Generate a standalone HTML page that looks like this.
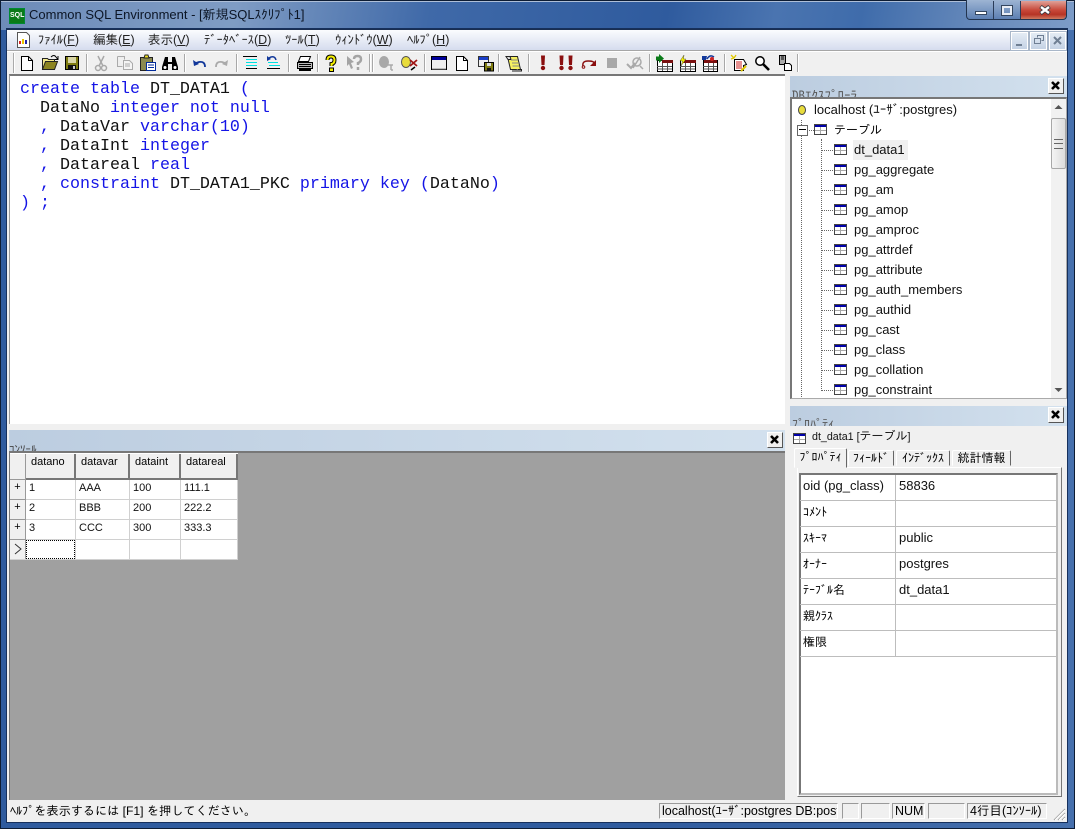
<!DOCTYPE html>
<html lang="ja"><head><meta charset="utf-8"><title>Common SQL Environment</title>
<style>
html,body{margin:0;padding:0;background:#1b3a6b}
body{width:1075px;height:829px;position:relative;overflow:hidden;font-family:"Liberation Sans","IPAGothic","Noto Sans CJK JP",sans-serif;font-size:13px;color:#000}
div,span.a,svg{position:absolute}
.t{white-space:nowrap;line-height:16px}
.m{top:32px;font-size:12.5px;color:#222;font-family:"Liberation Sans","IPAGothic",sans-serif}
.m u{text-decoration:underline}
.sep{top:54px;width:1px;height:18px;background:#a8a8a8;border-right:1px solid #fff}
.ic{top:54px;width:18px;height:18px}
.cl{width:14px;height:14px;background:#f0f0f0;border:1px solid;border-color:#fff #555 #555 #fff}
.cl svg{left:0;top:0}
.band{background:linear-gradient(90deg,#bccde0,#d3e1ee);overflow:hidden}
.tr{left:854px;font-size:13px;color:#111}
.dot{width:11px;height:0;border-top:1px dotted #666}
.ti{left:834px;width:13px;height:11px}
.code{left:20px;font-family:"Liberation Mono",monospace;font-size:16.67px;line-height:19px;white-space:pre;color:#111}
.code b{font-weight:normal;color:#1414e6}
.gh{background:#f0f0f0;border-right:2px solid #777;border-bottom:2px solid #777;box-sizing:border-box;top:454px;height:26px;font-size:11px;padding:1px 0 0 5px;line-height:14px}
.c{font-size:11px;font-family:"Liberation Sans",sans-serif;line-height:14px;white-space:nowrap;color:#111}
.gl{background:#d0d0d0}
.rh{left:10px;width:16px;height:20px;background:#f0f0f0;border-right:1px solid #999;border-bottom:1px solid #999;box-sizing:border-box;text-align:center;font-size:11px;line-height:14px}
.pk{left:803px;font-size:12px;font-family:"IPAGothic","Liberation Sans",sans-serif}
.pv{left:899px;font-size:13px;color:#111}
.hl{left:800px;width:256px;height:1px;background:#bdbdbd}
.tab{top:450px;height:16px;background:#f0f0f0;border:1px solid;border-color:#fff #666 #f0f0f0 #fff;font-size:12px;text-align:center;line-height:15px;font-family:"IPAGothic","Liberation Sans",sans-serif;box-sizing:border-box;white-space:nowrap;border-radius:2px 2px 0 0}
.sb{top:803px;height:16px;box-sizing:border-box;border:1px solid;border-color:#9a9a9a #fff #fff #9a9a9a;font-size:12.5px;line-height:14px;overflow:hidden;white-space:nowrap;padding-left:2px}
.mb{top:32px;width:18px;height:18px;background:linear-gradient(#e4ecf5,#c4d2e4);border:1px solid #fff;outline:1px solid #a9b7c9}
</style></head><body>

<svg width="0" height="0" style="left:0;top:0"><defs>
<g id="tb"><rect x=".5" y=".5" width="12" height="10" fill="#fff" stroke="#444"/><rect x="1" y="1" width="11" height="2" fill="#0000a8"/><path d="M1 6.500h11M6.500 3v7" stroke="#a8a8a8" fill="none"/></g>
<g id="bt"><path d="M3 3l7 7M10 3l-7 7" stroke="#000" stroke-width="2.600"/></g>
</defs></svg>

<!-- window chrome -->
<div style="left:0;top:0;width:1075px;height:829px;background:linear-gradient(90deg,#2f5b9e 0,#2f5b9e 60%,#4670ad 100%);border-radius:6px 6px 0 0"></div>
<div style="left:0;top:0;width:1075px;height:30px;background:linear-gradient(100deg,#6d8cb9 0,#7f9cc4 22%,#3f69a8 40%,#2f5b9e 62%,#4a74b0 72%,#3f6cab 80%,#6a8cbc 92%,#7d9cc8 100%);border-radius:6px 6px 0 0"></div>
<div style="left:1px;top:1px;width:1073px;height:1px;background:#aebfd8"></div>
<div style="left:0;top:0;width:1075px;height:1px;background:#0d1c33"></div>
<div style="left:0;top:0;width:1px;height:829px;background:#0d1c33"></div>
<div style="left:1074px;top:0;width:1px;height:829px;background:#0d1c33"></div>
<div style="left:0;top:828px;width:1075px;height:1px;background:#0d1c33"></div>
<div style="left:6px;top:28px;width:1062px;height:795px;background:#16305c"></div>
<div style="left:7px;top:29px;width:1060px;height:793px;background:#f0f0f0"></div>

<!-- app icon + title -->
<div style="left:9px;top:8px;width:14px;height:14px;background:#0a7a18;border:1px solid #083;color:#fff;font:bold 7px/14px 'Liberation Sans',sans-serif;text-align:center">SQL</div>
<div class="t" style="left:29px;top:7px;font-size:13px;color:#0c1626;font-family:'Liberation Sans','IPAGothic',sans-serif">Common SQL Environment - [新規SQLｽｸﾘﾌﾟﾄ1]</div>

<!-- window buttons -->
<div style="left:966px;top:0;width:101px;height:20px;background:linear-gradient(#9db4d3,#5d80b3);border:1px solid #22344f;border-top:0;border-radius:0 0 4px 4px;box-sizing:border-box"></div>
<div style="left:993px;top:1px;width:1px;height:18px;background:#2a3c58"></div>
<div style="left:1020px;top:1px;width:1px;height:18px;background:#2a3c58"></div>
<div style="left:1021px;top:1px;width:45px;height:18px;background:linear-gradient(#dfa197,#c8493a 50%,#b63325 75%,#cf7a5f);border-radius:0 0 4px 0"></div>
<div style="left:975px;top:11px;width:10px;height:2px;background:#fff;border:1px solid #34465f"></div>
<div style="left:1002px;top:6px;width:6px;height:5px;border:2px solid #e8edf5;outline:1px solid #34465f"></div>
<svg style="left:1038px;top:5px" width="14" height="10"><path d="M2.500 1.500l9 7M11.500 1.500l-9 7" stroke="#39393f" stroke-width="4"/><path d="M3 2l8 6M11 2l-8 6" stroke="#fff" stroke-width="2.400"/></svg>

<!-- menu bar -->
<div style="left:7px;top:29px;width:1060px;height:1px;background:#1a2e50"></div>
<div style="left:7px;top:30px;width:1060px;height:20px;background:linear-gradient(#fbfcfe,#d5dcee)"></div>
<div style="left:7px;top:50px;width:1060px;height:1px;background:#a6a6a6"></div>
<svg style="left:16px;top:32px" width="16" height="16"><path d="M1.500.5h9l3 3v12h-12z" fill="#fff" stroke="#555"/><rect x="3" y="9" width="2" height="3" fill="#d22"/><rect x="6" y="7" width="2" height="5" fill="#e8c400"/><rect x="9" y="8" width="2" height="4" fill="#22a"/></svg>
<div class="t m" style="left:38px">ﾌｧｲﾙ(<u>F</u>)</div>
<div class="t m" style="left:93px">編集(<u>E</u>)</div>
<div class="t m" style="left:148px">表示(<u>V</u>)</div>
<div class="t m" style="left:204px">ﾃﾞｰﾀﾍﾞｰｽ(<u>D</u>)</div>
<div class="t m" style="left:285px">ﾂｰﾙ(<u>T</u>)</div>
<div class="t m" style="left:335px">ｳｨﾝﾄﾞｳ(<u>W</u>)</div>
<div class="t m" style="left:407px">ﾍﾙﾌﾟ(<u>H</u>)</div>
<div class="mb" style="left:1011px;width:15px;height:16px"><div style="left:4px;top:11px;width:6px;height:2px;background:#6f7f93"></div></div>
<div class="mb" style="left:1030px;width:15px;height:16px"><svg style="left:3px;top:2px" width="10" height="10"><path d="M3.500 2.500V.5h6v5h-2M.5 3.500h6v5h-6z" fill="none" stroke="#6f7f93"/></svg></div>
<div class="mb" style="left:1049px;width:15px;height:16px"><svg style="left:3px;top:3px" width="9" height="9"><path d="M1 1l7 7M8 1l-7 7" stroke="#6f7f93" stroke-width="2"/></svg></div>

<!-- toolbar -->
<div style="left:7px;top:51px;width:1060px;height:1px;background:#fff"></div>
<div style="left:13px;top:53px;width:1px;height:20px;background:#aaa;border-right:1px solid #fff"></div>
<div class="sep" style="left:86px"></div><div class="sep" style="left:184px"></div><div class="sep" style="left:236px"></div><div class="sep" style="left:288px"></div><div class="sep" style="left:317px"></div><div class="sep" style="left:369px"></div><div class="sep" style="left:372px"></div><div class="sep" style="left:424px"></div><div class="sep" style="left:498px"></div><div class="sep" style="left:528px"></div><div class="sep" style="left:649px"></div><div class="sep" style="left:724px"></div><div class="sep" style="left:797px"></div>

<svg class="ic" style="left:18px" viewBox="0 0 18 18"><path d="M3.500 2.500h7l4 4v10h-11z" fill="#fff" stroke="#000"/><path d="M10.500 2.500v4h4" fill="none" stroke="#000"/></svg>
<svg class="ic" style="left:41px" viewBox="0 0 18 18"><path d="M1.500 4.500h5l1 1h6v2H5l-3.500 8z" fill="#f4ea8c" stroke="#222"/><path d="M1.500 15.500l3-8h12l-3 8z" fill="#8c8420" stroke="#222"/><path d="M10 3q3-3 5 0l1.500 2M17 2v3.500h-3" fill="none" stroke="#000"/></svg>
<svg class="ic" style="left:63px" viewBox="0 0 18 18"><rect x="2.500" y="2.500" width="13" height="13" fill="#7f7c12" stroke="#000"/><rect x="5" y="3" width="8" height="6" fill="#d9d6a6"/><rect x="5" y="11" width="8" height="4.500" fill="#111"/><rect x="10" y="12" width="2" height="3" fill="#ccc"/></svg>
<svg class="ic" style="left:92px" viewBox="0 0 18 18"><path d="M6 2l5 10M12 2L7 12" stroke="#a8a8a8" stroke-width="1.500"/><circle cx="6" cy="14" r="2.500" fill="none" stroke="#a8a8a8" stroke-width="1.500"/><circle cx="12" cy="14" r="2.500" fill="none" stroke="#a8a8a8" stroke-width="1.500"/></svg>
<svg class="ic" style="left:116px" viewBox="0 0 18 18"><path d="M1.500 2.500h7v3M1.500 2.500v10h5" fill="#eee" stroke="#aaa"/><path d="M7.500 6.500h6l3 3v6h-9z" fill="#f4f4f4" stroke="#aaa"/><path d="M9 10h5M9 12h5" stroke="#aaa"/></svg>
<svg class="ic" style="left:139px" viewBox="0 0 18 18"><rect x="1.500" y="3.500" width="12" height="13" fill="#8a8a50" stroke="#222"/><path d="M5 4l1-3h3l1 3z" fill="#eee020" stroke="#222"/><rect x="7.500" y="8.500" width="9" height="8" fill="#fff" stroke="#002a9a"/><path d="M9 11h6M9 13.500h6" stroke="#002a9a"/></svg>
<svg class="ic" style="left:161px" viewBox="0 0 18 18"><path d="M4 3h3v5h4V3h3l3 10v3h-6V10H7v6H1v-3z" fill="#000"/><circle cx="4" cy="13.500" r="1.500" fill="#fff"/><circle cx="14" cy="13.500" r="1.500" fill="#fff"/></svg>
<svg class="ic" style="left:190px" viewBox="0 0 18 18"><path d="M15 13q0-6-6-5l-3 1" fill="none" stroke="#12389a" stroke-width="1.800"/><path d="M3 6l1 6 5-2z" fill="#12389a"/></svg>
<svg class="ic" style="left:213px" viewBox="0 0 18 18"><path d="M3 13q0-6 6-5l3 1" fill="none" stroke="#aaa" stroke-width="1.800"/><path d="M15 6l-1 6-5-2z" fill="#aaa"/></svg>
<svg class="ic" style="left:241px" viewBox="0 0 18 18"><path d="M5 5.500h11M5 8.500h11M5 11.500h11" stroke="#00e0e0"/><path d="M2 2.500h14M5 14.500h11" stroke="#000"/></svg>
<svg class="ic" style="left:264px" viewBox="0 0 18 18"><path d="M4 8.500h10M5 11.500h11" stroke="#00e0e0"/><path d="M3 14.500h13" stroke="#000"/><path d="M12 6q-1-4-5-3L5 4" fill="none" stroke="#12389a" stroke-width="1.500"/><path d="M3 2v5l4-2z" fill="#12389a"/></svg>
<svg class="ic" style="left:296px" viewBox="0 0 18 18"><path d="M4.500 2.500h10l-2 5h-10z" fill="#fff" stroke="#000"/><path d="M1.500 8.500h15v6h-15z" fill="#bbb" stroke="#000"/><path d="M3 10.500h12M3 12.500h12" stroke="#000"/><rect x="3" y="15" width="12" height="2" fill="#000"/></svg>
<svg class="ic" style="left:322px" viewBox="0 0 18 18"><path d="M5.500 6q0-3.500 3.500-3.500T12.500 6 9.500 10v2" fill="none" stroke="#000" stroke-width="4"/><path d="M5.500 6q0-3.500 3.500-3.500T12.500 6 9.500 10v2" fill="none" stroke="#f5f000" stroke-width="2"/><rect x="7.500" y="14" width="4" height="3.500" fill="#f5f000" stroke="#000"/></svg>
<svg class="ic" style="left:345px" viewBox="0 0 18 18"><path d="M2 2l7 6-3 1 2 5-2 1-2-5-2 2z" fill="#a4a4a4"/><path d="M9 5q0-3 3.500-3T16 5t-3 4v2M13 13v3" fill="none" stroke="#a4a4a4" stroke-width="2.500"/></svg>
<svg class="ic" style="left:377px" viewBox="0 0 18 18"><ellipse cx="7" cy="8" rx="5" ry="6" fill="#a8a8a8"/><path d="M11 11h5M14 11v5M16 16h-2" stroke="#aaa" stroke-width="1.500" fill="none"/></svg>
<svg class="ic" style="left:400px" viewBox="0 0 18 18"><ellipse cx="6" cy="8" rx="4.500" ry="5.500" fill="#e8dc3c" stroke="#555"/><path d="M10 6l7 6M17 6l-7 6" stroke="#a01414" stroke-width="1.800"/><path d="M11 16l4-3" stroke="#000" stroke-width="1.500"/></svg>
<svg class="ic" style="left:430px" viewBox="0 0 18 18"><rect x="1.500" y="2.500" width="15" height="13" fill="#eee" stroke="#000"/><rect x="2" y="3" width="14" height="3" fill="#00009a"/><path d="M2 15h14" stroke="#888"/></svg>
<svg class="ic" style="left:453px" viewBox="0 0 18 18"><path d="M3.500 2.500h7l4 4v10h-11z" fill="#fff" stroke="#000"/><path d="M10.500 2.500v4h4" fill="none" stroke="#000"/></svg>
<svg class="ic" style="left:477px" viewBox="0 0 18 18"><rect x="1.500" y="2.500" width="10" height="10" fill="#eee" stroke="#333"/><rect x="2" y="3" width="9" height="3" fill="#1a3ec8"/><rect x="7.500" y="8.500" width="9" height="8.500" fill="#7f7c12" stroke="#000"/><rect x="10" y="9" width="4" height="3" fill="#ddd"/><rect x="10" y="14" width="4" height="3" fill="#111"/></svg>
<svg class="ic" style="left:505px" viewBox="0 0 18 18"><path d="M2.500 2.500h10l3 13h-10z" fill="#f5f060" stroke="#222"/><path d="M1 2.500h4l1 3H3zM13 15.500h3.500v1.500H7" fill="#ddd" stroke="#222"/><path d="M6 6h7M7 9h7M7.500 12h7" stroke="#888"/></svg>
<svg class="ic" style="left:534px" viewBox="0 0 18 18"><path d="M7 1.500h4L10.500 11h-3z" fill="#8a0f0f"/><circle cx="9" cy="14" r="2.200" fill="#8a0f0f"/></svg>
<svg class="ic" style="left:557px" viewBox="0 0 18 18"><path d="M2.500 1.500h4L6 11H3zM11.500 1.500h4L15 11h-3z" fill="#8a0f0f"/><circle cx="4.500" cy="14" r="2.200" fill="#8a0f0f"/><circle cx="13.500" cy="14" r="2.200" fill="#8a0f0f"/></svg>
<svg class="ic" style="left:580px" viewBox="0 0 18 18"><path d="M3 12q-1-5 5-5t6 2" fill="none" stroke="#8a0f0f" stroke-width="1.500"/><circle cx="3.500" cy="13" r="1.300" fill="none" stroke="#8a0f0f"/><path d="M16 6v6h-6z" fill="#8a0f0f"/></svg>
<svg class="ic" style="left:603px" viewBox="0 0 18 18"><rect x="4" y="4" width="10" height="10" fill="#a8a8a8"/></svg>
<svg class="ic" style="left:626px" viewBox="0 0 18 18"><path d="M1 10l4 4 4-5" fill="none" stroke="#aaa" stroke-width="2"/><circle cx="11" cy="8" r="4" fill="none" stroke="#aaa" stroke-width="1.500"/><path d="M14 3l-7 11M14 12l3 3" stroke="#aaa" stroke-width="1.500"/></svg>
<svg class="ic" style="left:655px" viewBox="0 0 18 18"><rect x="2.500" y="6.500" width="15" height="11" fill="#fff" stroke="#000"/><rect x="7" y="6" width="11" height="3" fill="#7a1010"/><path d="M2 12.500h15M2 15h15M7.500 9v8M12.500 9v8" stroke="#555"/><path d="M1 1.500h3V-1l5 4.500L4 8V5.500H1z" fill="#0a7a18" transform="translate(0 1)"/></svg>
<svg class="ic" style="left:678px" viewBox="0 0 18 18"><rect x="2.500" y="6.500" width="15" height="11" fill="#fff" stroke="#000"/><rect x="5" y="6" width="13" height="3" fill="#7a1010"/><path d="M2 12.500h15M2 15h15M7.500 9v8M12.500 9v8" stroke="#555"/><path d="M6 1L2 7h2.500L3 12l5-7H5.500z" fill="#f5f000" stroke="#333" stroke-width=".4"/></svg>
<svg class="ic" style="left:701px" viewBox="0 0 18 18"><rect x="2.500" y="6.500" width="14" height="11" fill="#fff" stroke="#000"/><rect x="3" y="6" width="13" height="3" fill="#7a1010"/><path d="M2 12.500h14M2 15h14M7.500 9v8M12.500 9v8" stroke="#555"/><path d="M1 2h5l-1 4H1z" fill="#12389a"/><path d="M6 5q3-5 7-2" fill="none" stroke="#12389a" stroke-width="1.500"/><circle cx="11" cy="5" r="2" fill="#c22"/></svg>
<svg class="ic" style="left:730px" viewBox="0 0 18 18"><path d="M4.500 5.500h9l3 5-3 1v5h-9z" fill="#fff" stroke="#000"/><path d="M6 8h6M6 10h6M6 12h6M6 14h6" stroke="#c22"/><path d="M1 1l3 3M6 1L4 4M1 5l3-1" stroke="#e0c800" stroke-width="1.300"/><path d="M16 12l-5 5" stroke="#e0c800" stroke-width="2"/></svg>
<svg class="ic" style="left:753px" viewBox="0 0 18 18"><circle cx="7" cy="7" r="4.200" fill="#fff" stroke="#000" stroke-width="1.500"/><path d="M10 10l6 6" stroke="#000" stroke-width="2.600"/></svg>
<svg class="ic" style="left:776px" viewBox="0 0 18 18"><path d="M3.500 1.500h6v9h-6z" fill="#aaa" stroke="#000"/><path d="M5 3h3M5 5h3" stroke="#000"/><path d="M8.500 9.500h5l2 2v5h-7z" fill="#fff" stroke="#000"/></svg>

<!-- editor -->
<div style="left:9px;top:74px;width:776px;height:350px;background:#fff;border-top:2px solid #777;border-left:1px solid #999;box-sizing:border-box"></div>
<div class="code" style="top:80px"><b>create table</b> DT_DATA1 <b>(</b>
  DataNo <b>integer not null</b>
  <b>,</b> DataVar <b>varchar(10)</b>
  <b>,</b> DataInt <b>integer</b>
  <b>,</b> Datareal <b>real</b>
  <b>, constraint</b> DT_DATA1_PKC <b>primary key</b> <b>(</b>DataNo<b>)</b>
<b>) ;</b></div>

<!-- console band -->
<div class="band" style="left:9px;top:430px;width:776px;height:21px"><div class="t" style="left:0;top:12px;font-size:11px;font-family:'IPAGothic',sans-serif;color:#444">ｺﾝｿｰﾙ</div></div>
<div class="cl" style="left:767px;top:432px"><svg width="13" height="13"><use href="#bt"/></svg></div>

<!-- grid area -->
<div style="left:9px;top:451px;width:776px;height:349px;background:#a0a0a0;border-top:2px solid #777;border-left:1px solid #777;box-sizing:border-box"></div>
<div style="left:10px;top:453px;width:228px;height:107px;background:#fff"></div>
<div style="left:10px;top:454px;width:16px;height:26px;background:#f0f0f0;border-right:1px solid #999;border-bottom:1px solid #999;box-sizing:border-box"></div>
<div class="gh" style="left:26px;width:50px">datano</div>
<div class="gh" style="left:76px;width:54px">datavar</div>
<div class="gh" style="left:130px;width:51px">dataint</div>
<div class="gh" style="left:181px;width:57px">datareal</div>
<div class="rh" style="top:480px">+</div><div class="rh" style="top:500px">+</div><div class="rh" style="top:520px">+</div><div class="rh" style="top:540px"><svg style="left:4px;top:3px" width="8" height="12"><path d="M1 1l6 5-6 5" fill="none" stroke="#333"/></svg></div>
<div class="gl" style="left:26px;top:499px;width:212px;height:1px"></div><div class="gl" style="left:26px;top:519px;width:212px;height:1px"></div><div class="gl" style="left:26px;top:539px;width:212px;height:1px"></div><div class="gl" style="left:10px;top:559px;width:228px;height:1px"></div>
<div class="gl" style="left:75px;top:480px;width:1px;height:80px"></div><div class="gl" style="left:129px;top:480px;width:1px;height:80px"></div><div class="gl" style="left:180px;top:480px;width:1px;height:80px"></div><div class="gl" style="left:237px;top:480px;width:1px;height:80px"></div>
<div class="c" style="left:29px;top:481px">1</div><div class="c" style="left:79px;top:481px">AAA</div><div class="c" style="left:133px;top:481px">100</div><div class="c" style="left:184px;top:481px">111.1</div>
<div class="c" style="left:29px;top:501px">2</div><div class="c" style="left:79px;top:501px">BBB</div><div class="c" style="left:133px;top:501px">200</div><div class="c" style="left:184px;top:501px">222.2</div>
<div class="c" style="left:29px;top:521px">3</div><div class="c" style="left:79px;top:521px">CCC</div><div class="c" style="left:133px;top:521px">300</div><div class="c" style="left:184px;top:521px">333.3</div>
<div style="left:26px;top:540px;width:49px;height:19px;border:1px dotted #000;box-sizing:border-box"></div>

<!-- DB explorer -->
<div class="band" style="left:790px;top:76px;width:277px;height:21px"><div class="t" style="left:2px;top:12px;font-size:13px;font-family:'IPAGothic',sans-serif;color:#555">DBｴｸｽﾌﾟﾛｰﾗ</div></div>
<div class="cl" style="left:1048px;top:78px"><svg width="13" height="13"><use href="#bt"/></svg></div>
<div style="left:790px;top:97px;width:277px;height:302px;background:#fff;border:2px solid #777;border-right:1px solid #aaa;border-bottom:1px solid #aaa;box-sizing:border-box"></div>
<!-- scrollbar -->
<div style="left:1051px;top:99px;width:15px;height:299px;background:#f1f1f1"></div>
<div style="left:1051px;top:118px;width:15px;height:51px;background:linear-gradient(90deg,#f4f4f4,#dcdcdc);border:1px solid #a8a8a8;border-radius:2px;box-sizing:border-box"></div>
<div style="left:1054px;top:139px;width:9px;height:8px;border-top:1px solid #666;border-bottom:1px solid #666"></div><div style="left:1054px;top:143px;width:9px;height:1px;background:#666"></div>
<svg style="left:1053px;top:104px" width="11" height="6"><path d="M5.500 1l4 4h-8z" fill="#555"/></svg>
<svg style="left:1053px;top:387px" width="11" height="6"><path d="M5.500 5l4-4h-8z" fill="#555"/></svg>

<svg style="left:797px;top:104px" width="11" height="12"><ellipse cx="5" cy="6" rx="3.500" ry="4.500" fill="#e8dc3c" stroke="#444"/></svg>
<div class="t tr" style="left:814px;top:102px">localhost (ﾕｰｻﾞ:postgres)</div>
<div style="left:801px;top:120px;width:0;height:277px;border-left:1px dotted #666"></div>
<div style="left:821px;top:139px;width:0;height:252px;border-left:1px dotted #666"></div>
<div style="left:797px;top:125px;width:9px;height:9px;background:#fff;border:1px solid #666"></div><div style="left:799px;top:129px;width:7px;height:1px;background:#000"></div>
<div style="left:807px;top:130px;width:7px;height:0;border-top:1px dotted #666"></div>
<svg style="left:814px;top:124px" width="13" height="11"><use href="#tb"/></svg>
<div class="t" style="left:834px;top:122px;font-size:12px;font-family:'Liberation Sans','IPAGothic',sans-serif">テーブル</div>
<div style="left:853px;top:140px;width:55px;height:20px;background:#f0f0f0"></div>

<!-- tree rows -->
<div class="dot" style="left:822px;top:150px"></div><svg class="ti" style="top:144px"><use href="#tb"/></svg><div class="t tr" style="top:142px">dt_data1</div>
<div class="dot" style="left:822px;top:170px"></div><svg class="ti" style="top:164px"><use href="#tb"/></svg><div class="t tr" style="top:162px">pg_aggregate</div>
<div class="dot" style="left:822px;top:190px"></div><svg class="ti" style="top:184px"><use href="#tb"/></svg><div class="t tr" style="top:182px">pg_am</div>
<div class="dot" style="left:822px;top:210px"></div><svg class="ti" style="top:204px"><use href="#tb"/></svg><div class="t tr" style="top:202px">pg_amop</div>
<div class="dot" style="left:822px;top:230px"></div><svg class="ti" style="top:224px"><use href="#tb"/></svg><div class="t tr" style="top:222px">pg_amproc</div>
<div class="dot" style="left:822px;top:250px"></div><svg class="ti" style="top:244px"><use href="#tb"/></svg><div class="t tr" style="top:242px">pg_attrdef</div>
<div class="dot" style="left:822px;top:270px"></div><svg class="ti" style="top:264px"><use href="#tb"/></svg><div class="t tr" style="top:262px">pg_attribute</div>
<div class="dot" style="left:822px;top:290px"></div><svg class="ti" style="top:284px"><use href="#tb"/></svg><div class="t tr" style="top:282px">pg_auth_members</div>
<div class="dot" style="left:822px;top:310px"></div><svg class="ti" style="top:304px"><use href="#tb"/></svg><div class="t tr" style="top:302px">pg_authid</div>
<div class="dot" style="left:822px;top:330px"></div><svg class="ti" style="top:324px"><use href="#tb"/></svg><div class="t tr" style="top:322px">pg_cast</div>
<div class="dot" style="left:822px;top:350px"></div><svg class="ti" style="top:344px"><use href="#tb"/></svg><div class="t tr" style="top:342px">pg_class</div>
<div class="dot" style="left:822px;top:370px"></div><svg class="ti" style="top:364px"><use href="#tb"/></svg><div class="t tr" style="top:362px">pg_collation</div>
<div class="dot" style="left:822px;top:390px"></div><svg class="ti" style="top:384px"><use href="#tb"/></svg><div class="t tr" style="top:382px">pg_constraint</div>

<!-- properties -->
<div class="band" style="left:790px;top:406px;width:277px;height:20px"><div class="t" style="left:2px;top:10px;font-size:12px;font-family:'IPAGothic',sans-serif;color:#555">ﾌﾟﾛﾊﾟﾃｨ</div></div>
<div class="cl" style="left:1048px;top:407px"><svg width="13" height="13"><use href="#bt"/></svg></div>
<svg style="left:793px;top:433px" width="13" height="11"><use href="#tb"/></svg>
<div class="t" style="left:812px;top:428px;font-size:10.7px;font-family:'Liberation Sans','IPAGothic',sans-serif;color:#111">dt_data1 [<span style="font-size:12px">テーブル</span>]</div>
<div style="left:797px;top:467px;width:265px;height:330px;border:1px solid;border-color:#fff #777 #777 #fff;box-sizing:border-box"></div>
<div class="tab" style="left:794px;top:448px;width:53px;height:20px;z-index:2;line-height:17px">ﾌﾟﾛﾊﾟﾃｨ</div>
<div class="tab" style="left:848px;width:46px">ﾌｨｰﾙﾄﾞ</div>
<div class="tab" style="left:896px;width:54px">ｲﾝﾃﾞｯｸｽ</div>
<div class="tab" style="left:952px;width:59px">統計情報</div>

<div style="left:799px;top:473px;width:259px;height:322px;background:#fff;border:2px solid #777;border-right:2px solid #bbb;border-bottom:2px solid #bbb;box-sizing:border-box"></div>
<div class="hl" style="top:500px"></div><div class="hl" style="top:526px"></div><div class="hl" style="top:552px"></div><div class="hl" style="top:578px"></div><div class="hl" style="top:604px"></div><div class="hl" style="top:630px"></div><div class="hl" style="top:656px"></div>
<div style="left:895px;top:475px;width:1px;height:182px;background:#bdbdbd"></div>

<div class="t pv" style="left:803px;top:478px">oid (pg_class)</div><div class="t pv" style="top:478px">58836</div>
<div class="t pk" style="top:504px">ｺﾒﾝﾄ</div>
<div class="t pk" style="top:530px">ｽｷｰﾏ</div><div class="t pv" style="top:530px">public</div>
<div class="t pk" style="top:556px">ｵｰﾅｰ</div><div class="t pv" style="top:556px">postgres</div>
<div class="t pk" style="top:582px">ﾃｰﾌﾞﾙ名</div><div class="t pv" style="top:582px">dt_data1</div>
<div class="t pk" style="top:608px">親ｸﾗｽ</div>
<div class="t pk" style="top:634px">権限</div>

<!-- status bar -->
<div class="t" style="left:10px;top:803px;font-size:12.15px;font-family:'Liberation Sans','IPAGothic',sans-serif">ﾍﾙﾌﾟを表示するには [F1] を押してください。</div>
<div class="sb" style="left:659px;width:179px">localhost(ﾕｰｻﾞ:postgres DB:postgres)</div>
<div class="sb" style="left:842px;width:17px"></div>
<div class="sb" style="left:861px;width:29px"></div>
<div class="sb" style="left:892px;width:33px">NUM</div>
<div class="sb" style="left:928px;width:37px"></div>
<div class="sb" style="left:967px;width:80px;font-family:'Liberation Sans','IPAGothic',sans-serif">4行目(ｺﾝｿｰﾙ)</div>
<svg style="left:1052px;top:807px" width="14" height="14"><path d="M13 2L2 13M13 6l-7 7M13 10l-3 3" stroke="#999"/><path d="M13 3L3 13M13 7l-6 6M13 11l-2 2" stroke="#fff"/></svg>
</body></html>
